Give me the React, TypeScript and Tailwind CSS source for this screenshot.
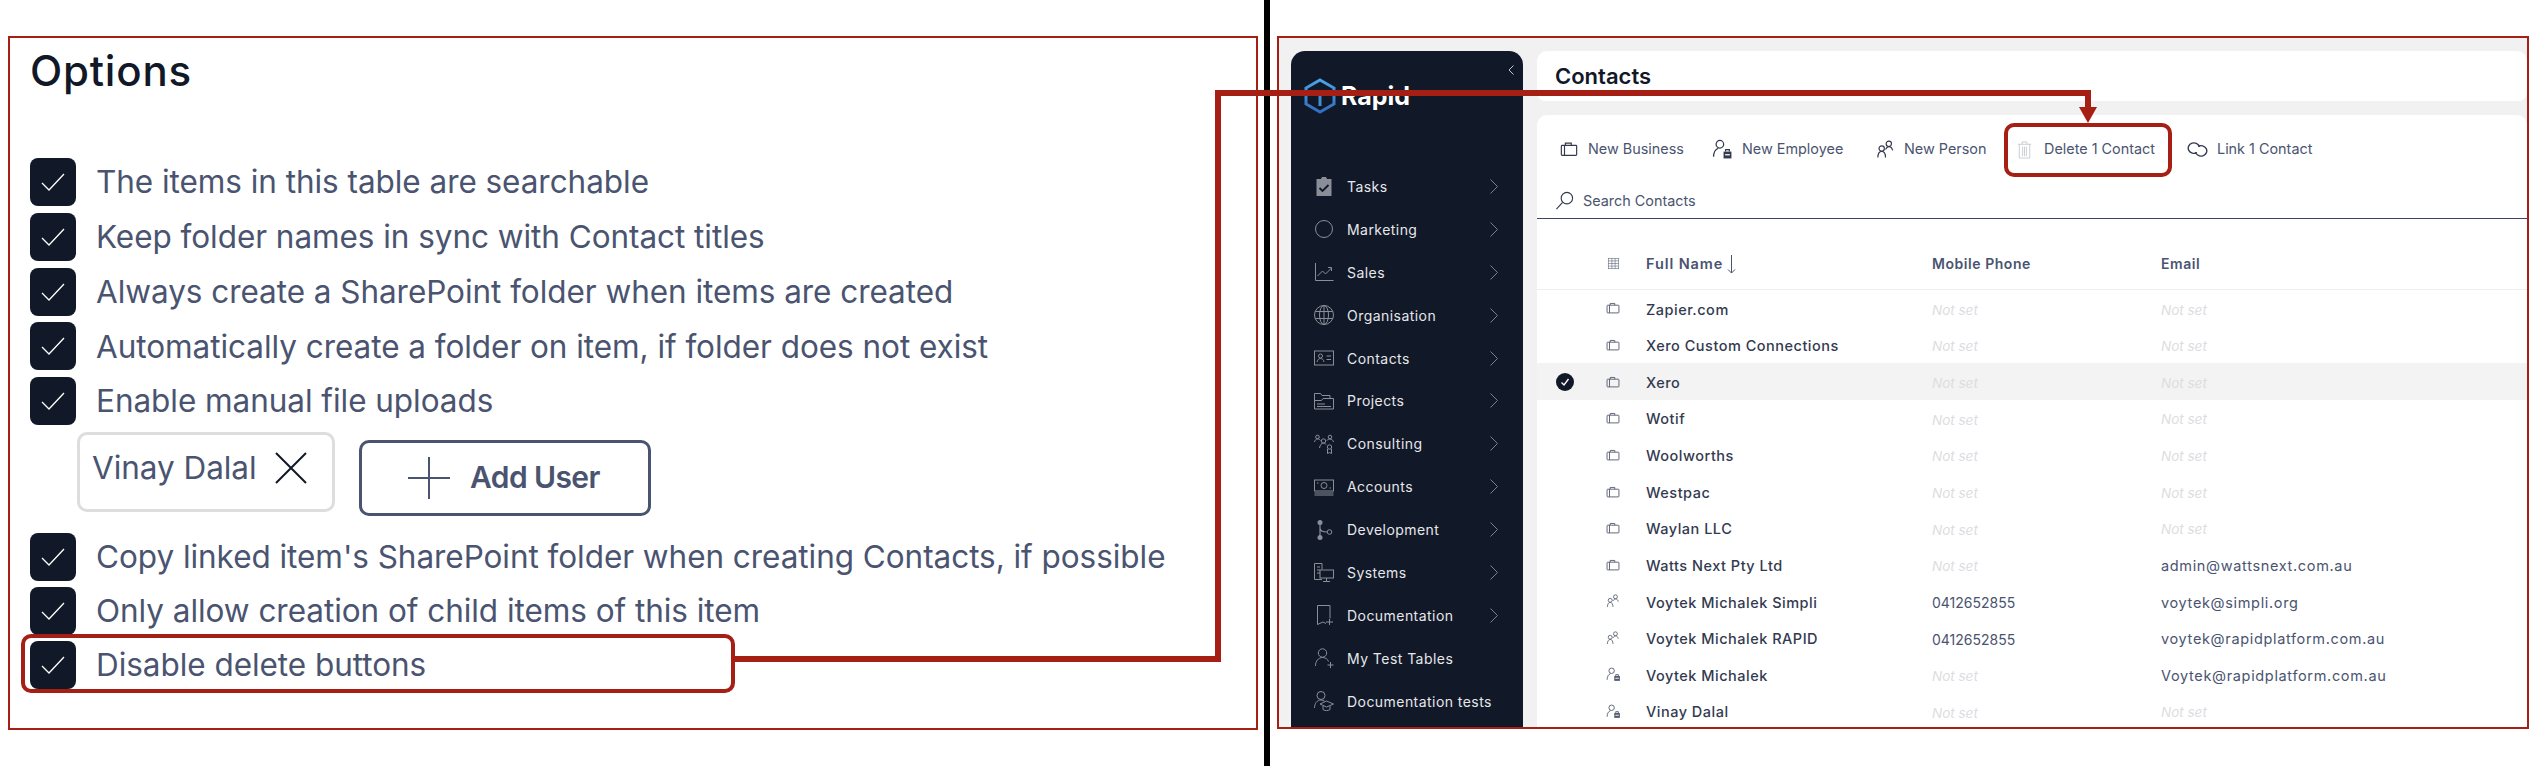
import React from 'react';

type IconProps = { size?: number; className?: string };

const Svg: React.FC<IconProps & { children: React.ReactNode; sw?: number }> = ({ size = 20, className, children, sw = 1 }) => (
  <svg width={size} height={size} viewBox="0 0 20 20" fill="none" stroke="currentColor" strokeWidth={sw} className={className}>
    {children}
  </svg>
);

// toolbar + row icons
const Briefcase: React.FC<IconProps> = (p) => (
  <Svg {...p} sw={1.3}>
    <rect x="1.5" y="6" width="17" height="11" rx="1" />
    <path d="M5 17V6M6 6V3.500h6.500V6" />
  </Svg>
);
const Employee: React.FC<IconProps> = (p) => (
  <Svg {...p} sw={1.2}>
    <circle cx="7.500" cy="5" r="3.600" />
    <path d="M1.500 17c0-4 1.500-7 4.500-8.200" />
    <rect x="11" y="12" width="7.500" height="6.500" fill="currentColor" stroke="none" />
    <path d="M13 12v-1.800h3.500V12" />
    <path d="M12.500 15h4.500" stroke="#fff" />
  </Svg>
);
const People: React.FC<IconProps> = (p) => (
  <Svg {...p} sw={1.2}>
    <circle cx="13.500" cy="4" r="2.800" />
    <circle cx="6" cy="9" r="2.800" />
    <path d="M10 10c1-2 2-3 3.500-3 2 0 3.500 1.500 4 4" />
    <path d="M2 18.500c0-3.500 1.500-6.500 4-6.500s4 3 4 6.500" />
  </Svg>
);
const Trash: React.FC<IconProps> = (p) => (
  <Svg {...p} sw={1}>
    <path d="M3 4.500h14M7.500 4.500V2h5v2.500M4.500 4.500v14.500h11V4.500M8 7v10M10 7v10M12 7v10" />
  </Svg>
);
const LinkIcon: React.FC<IconProps> = (p) => (
  <Svg {...p} sw={1.3}>
    <path d="M9.500 13A5.500 5 0 1 1 12 7.500" />
    <path d="M10.500 7A5.500 5 0 1 1 8 12.500" />
  </Svg>
);
const Search: React.FC<IconProps> = (p) => (
  <Svg {...p} sw={1.2}>
    <circle cx="12.500" cy="7.500" r="6" />
    <path d="M8 12 1.500 19" />
  </Svg>
);
const TableGrid: React.FC<IconProps> = (p) => (
  <Svg {...p} sw={1}>
    <rect x="2" y="2" width="16" height="16" />
    <path d="M2 6h16M2 10h16M2 14h16M7.500 2v16M12.500 2v16" />
  </Svg>
);

// sidebar icons
const Tasks: React.FC<IconProps> = (p) => (
  <Svg {...p}>
    <path d="M2.500 3h4.500l1-2h4l1 2h4.500v17h-15z" fill="currentColor" stroke="none" />
    <path d="M5.500 12l3 3 6-6" stroke="#111827" strokeWidth={1.800} />
  </Svg>
);
const Circle: React.FC<IconProps> = (p) => (
  <Svg {...p}><circle cx="10" cy="10" r="8.500" /></Svg>
);
const Sales: React.FC<IconProps> = (p) => (
  <Svg {...p}>
    <path d="M1.500 1v17.500h18M3.500 14l5-5 3 3 6-6M14 5.500h3.500V9" />
  </Svg>
);
const Globe: React.FC<IconProps> = (p) => (
  <Svg {...p}>
    <circle cx="10" cy="10" r="9.500" />
    <ellipse cx="10" cy="10" rx="4.500" ry="9.500" />
    <path d="M10 .5v19M1.300 6.500h17.400M1.300 13.500h17.400" />
  </Svg>
);
const Card: React.FC<IconProps> = (p) => (
  <Svg {...p}>
    <rect x=".5" y="3" width="19" height="14" />
    <circle cx="6.500" cy="8" r="2" />
    <path d="M3 14c.5-2.500 2-3.500 3.500-3.500S9.500 11.500 10 14M12.500 8h4.500M12.500 11.500h4.500" />
  </Svg>
);
const Folders: React.FC<IconProps> = (p) => (
  <Svg {...p}>
    <path d="M.5 18V2.500h6l1.500 2h8v3" />
    <path d="M.5 18h19V7.500H9l-1.500 2H.5" />
    <path d="M3 13h8M3 15.500h14" />
  </Svg>
);
const Consulting: React.FC<IconProps> = (p) => (
  <Svg {...p}>
    <circle cx="3.500" cy="3" r="1.800" /><circle cx="16" cy="3" r="1.800" />
    <circle cx="9.500" cy="7" r="2.200" /><circle cx="15.500" cy="13" r="2.200" />
    <path d="M.5 8c.5-2 1.500-3 3-3s2 .5 3 1.500M13 6.500c.5-1 1.500-1.500 3-1.500s3 1 3.500 3M5.500 14c.5-3 2-5 4-5 1 0 2 .5 2.500 1.500M13.500 15v4.500l2-1 2 1V15" />
  </Svg>
);
const Money: React.FC<IconProps> = (p) => (
  <Svg {...p}>
    <rect x=".5" y="3" width="19" height="11" />
    <circle cx="10" cy="8.500" r="3" />
    <path d="M.5 16h19M.5 18h19M3 6h1.500M15.500 11H17" />
  </Svg>
);
const Branch: React.FC<IconProps> = (p) => (
  <Svg {...p}>
    <circle cx="6" cy="2.500" r="2.500" fill="currentColor" stroke="none" />
    <circle cx="6" cy="17.500" r="2.500" fill="currentColor" stroke="none" />
    <circle cx="15.500" cy="12" r="2.300" />
    <path d="M6 3v14M6 8c0 3 3 4 7 4" strokeWidth={1.200} />
  </Svg>
);
const Systems: React.FC<IconProps> = (p) => (
  <Svg {...p}>
    <path d="M8 17.500H.5V1.500H8v6M3 5h3M3 8h3M3 11h3" />
    <rect x="6" y="8" width="13.500" height="8" />
    <path d="M12.500 16v3M9 19.500h7" />
  </Svg>
);
const BookPlus: React.FC<IconProps> = (p) => (
  <Svg {...p}>
    <path d="M3.500 19.500V.5h12.500v13M3.500 19.500l5.500-2.500 3 1.500M12 17h7M15.500 14v6" />
  </Svg>
);
const UserPlus: React.FC<IconProps> = (p) => (
  <Svg {...p}>
    <circle cx="8.500" cy="5" r="4.200" />
    <path d="M1.500 18c0-5 3-8.500 7-8.500 3 0 5 1.500 6 4M13.500 17h6M16.500 14v6" />
  </Svg>
);
const UserGrad: React.FC<IconProps> = (p) => (
  <Svg {...p}>
    <circle cx="7" cy="4.500" r="4" />
    <path d="M.5 17c0-4.500 2.500-8 6.500-8 1.500 0 2.500.5 3.500 1M6 13l6.500-3 7 3-7 3zM9 15v3.500c2 1.500 5 1.500 7 0V15" />
  </Svg>
);

const Check = () => (
  <svg width="24" height="18" viewBox="0 0 24 18" fill="none" stroke="#fff" strokeWidth="1.300">
    <path d="M1 10l7 7L23 1" />
  </svg>
);

const optionsTop = [
  'The items in this table are searchable',
  'Keep folder names in sync with Contact titles',
  'Always create a SharePoint folder when items are created',
  'Automatically create a folder on item, if folder does not exist',
  'Enable manual file uploads',
];
const optionsBottom = [
  "Copy linked item's SharePoint folder when creating Contacts, if possible",
  'Only allow creation of child items of this item',
  'Disable delete buttons',
];

const OptionRow: React.FC<{ label: string }> = ({ label }) => (
  <div className="flex h-[48px] items-center gap-[20px]">
    <div className="flex h-[48px] w-[46px] shrink-0 items-center justify-center rounded-[8px] bg-[#111827]">
      <Check />
    </div>
    <span className="text-[31.5px] tracking-[-0.05px] text-[#4a5470]">{label}</span>
  </div>
);

const navItems: { label: string; icon: React.FC<IconProps>; arrow: boolean }[] = [
  { label: 'Tasks', icon: Tasks, arrow: true },
  { label: 'Marketing', icon: Circle, arrow: true },
  { label: 'Sales', icon: Sales, arrow: true },
  { label: 'Organisation', icon: Globe, arrow: true },
  { label: 'Contacts', icon: Card, arrow: true },
  { label: 'Projects', icon: Folders, arrow: true },
  { label: 'Consulting', icon: Consulting, arrow: true },
  { label: 'Accounts', icon: Money, arrow: true },
  { label: 'Development', icon: Branch, arrow: true },
  { label: 'Systems', icon: Systems, arrow: true },
  { label: 'Documentation', icon: BookPlus, arrow: true },
  { label: 'My Test Tables', icon: UserPlus, arrow: false },
  { label: 'Documentation tests', icon: UserGrad, arrow: false },
];

const toolbar: { label: string; icon: React.FC<IconProps>; size: number; iconClass: string; width: string; gap: string }[] = [
  { label: 'New Business', icon: Briefcase, size: 18, iconClass: 'text-[#333a4f]', width: 'w-[152px]', gap: 'gap-[10px]' },
  { label: 'New Employee', icon: Employee, size: 21, iconClass: 'text-[#333a4f]', width: 'w-[164px]', gap: 'gap-[9px]' },
  { label: 'New Person', icon: People, size: 19, iconClass: 'text-[#333a4f]', width: 'w-[139px]', gap: 'gap-[9px]' },
  { label: 'Delete 1 Contact', icon: Trash, size: 19, iconClass: 'text-[#c9cbd1]', width: 'w-[172px]', gap: 'gap-[10px]' },
  { label: 'Link 1 Contact', icon: LinkIcon, size: 21, iconClass: 'text-[#333a4f]', width: 'w-[172px]', gap: 'gap-[9px]' },
];

const rows: { name: string; kind: 'biz' | 'person' | 'emp'; phone?: string; email?: string; selected?: boolean }[] = [
  { name: 'Zapier.com', kind: 'biz' },
  { name: 'Xero Custom Connections', kind: 'biz' },
  { name: 'Xero', kind: 'biz', selected: true },
  { name: 'Wotif', kind: 'biz' },
  { name: 'Woolworths', kind: 'biz' },
  { name: 'Westpac', kind: 'biz' },
  { name: 'Waylan LLC', kind: 'biz' },
  { name: 'Watts Next Pty Ltd', kind: 'biz', email: 'admin@wattsnext.com.au' },
  { name: 'Voytek Michalek Simpli', kind: 'person', phone: '0412652855', email: 'voytek@simpli.org' },
  { name: 'Voytek Michalek RAPID', kind: 'person', phone: '0412652855', email: 'voytek@rapidplatform.com.au' },
  { name: 'Voytek Michalek', kind: 'emp', email: 'Voytek@rapidplatform.com.au' },
  { name: 'Vinay Dalal', kind: 'emp' },
];

const NotSet = () => <span className="text-[13.5px] italic tracking-normal text-[#dcdde1]">Not set</span>;

const Sidebar = () => (
  <aside className="relative w-[232px] shrink-0 rounded-t-[14px] bg-[#111827] pl-[13px]">
    <svg className="absolute right-[9px] top-[14px]" width="6" height="10" viewBox="0 0 6 10" fill="none" stroke="#c5c7cd">
      <path d="M5.500.5 1 5l4.500 4.500" />
    </svg>
    <div className="mt-[27px] flex h-[36px] items-center gap-[5px]">
      <svg width="32" height="36" viewBox="0 0 32 36" fill="none">
        <defs>
          <linearGradient id="logoBlue" x1="0" y1="0" x2="0" y2="1">
            <stop offset="0" stopColor="#4aa3e8" />
            <stop offset="1" stopColor="#2f6fc0" />
          </linearGradient>
        </defs>
        <path d="M16 2 30 10v16l-14 8-14-8V10z" stroke="url(#logoBlue)" strokeWidth="3" />
        <path d="M9 14h14M16 14v14" stroke="#3f8fd6" strokeWidth="3" />
      </svg>
      <span className="text-[25px] font-bold leading-none text-white">Rapid</span>
    </div>
    <nav className="mt-[51px] flex flex-col">
      {navItems.map(({ label, icon: Icon, arrow }) => (
        <div key={label} className="flex h-[42.9px] items-center">
          <div className="flex w-[34px] shrink-0 items-center pl-[10px] text-[#8a8e98]">
            <Icon size={20} />
          </div>
          <span className="ml-[9px] whitespace-nowrap text-[14px] tracking-[0.45px] text-[#e6e7ea]">{label}</span>
          {arrow && (
            <svg className="absolute left-[199px]" width="8" height="15" viewBox="0 0 8 15" fill="none" stroke="#7c808b">
              <path d="M.5.5l7 7-7 7" />
            </svg>
          )}
        </div>
      ))}
    </nav>
  </aside>
);

const ContactsTable = () => (
  <div className="flex min-h-0 flex-1 flex-col rounded-t-[10px] bg-white">
    <div className="flex h-[69px] items-center pl-[23px]">
      {toolbar.map(({ label, icon: Icon, size, iconClass, width, gap }) => (
        <div key={label} className={`flex shrink-0 items-center ${width} ${gap}`}>
          <Icon size={size} className={iconClass} />
          <span className="whitespace-nowrap text-[14.4px] text-[#4a5470]">{label}</span>
        </div>
      ))}
    </div>
    <div className="flex h-[36px] items-center gap-[9px] border-b-[1.5px] border-[#3c4560] pl-[18px]">
      <Search size={19} className="text-[#333a4f]" />
      <span className="text-[14.4px] text-[#4a5470]">Search Contacts</span>
    </div>
    <div className="flex h-[71px] items-center border-b border-[#eeeeee] pt-[19px] text-[14px] font-semibold tracking-[0.55px] text-[#4a5470]">
      <div className="w-[70px] shrink-0" />
      <TableGrid size={13} className="text-[#6b7280]" />
      <div className="ml-[26px] flex w-[286px] shrink-0 items-center gap-[4px]">
        <span className="text-[14.5px] tracking-[0.9px]">Full Name</span>
        <svg width="9" height="20" viewBox="0 0 9 20" fill="none" stroke="#4a5470"><path d="M4.500 1v18M1 15.500 4.500 19 8 15.500" /></svg>
      </div>
      <div className="w-[229px] shrink-0">Mobile Phone</div>
      <div>Email</div>
    </div>
    <div className="flex flex-col overflow-hidden">
      {rows.map((r) => (
        <div key={r.name} className={`flex h-[36.64px] shrink-0 items-center text-[14.5px] tracking-[0.5px] ${r.selected ? 'bg-[#f3f3f3]' : ''}`}>
          <div className="w-[69px] shrink-0 pl-[19px]">
            {r.selected && (
              <div className="flex h-[18px] w-[18px] items-center justify-center rounded-full bg-[#111827]">
                <svg width="10" height="10" viewBox="0 0 10 10" fill="none" stroke="#fff" strokeWidth="1.400"><path d="M1.500 5.500 4 8l4.500-6" /></svg>
              </div>
            )}
          </div>
          <div className="w-[40px] shrink-0">
            {r.kind === 'biz' && <Briefcase size={14} className="text-[#555c70]" />}
            {r.kind === 'person' && <People size={14} className="text-[#555c70]" />}
            {r.kind === 'emp' && <Employee size={15} className="text-[#555c70]" />}
          </div>
          <div className="w-[286px] shrink-0 pt-[2px] font-medium text-[#333a4f]">{r.name}</div>
          <div className="w-[229px] shrink-0 pt-[2px] text-[14px] tracking-normal text-[#4a5470]">{r.phone ?? <NotSet />}</div>
          <div className="pt-[2px] tracking-[0.66px] text-[#4a5470]">{r.email ?? <NotSet />}</div>
        </div>
      ))}
    </div>
  </div>
);

const App: React.FC = () => (
  <div className="relative flex h-[766px] w-[2536px] overflow-hidden bg-white pt-[36px] font-['Inter',sans-serif]">
    {/* left: options panel */}
    <section className="ml-[8px] h-[694px] w-[1250px] shrink-0 border-2 border-[#a61f14] pl-[20px]">
      <h2 className="mt-[9px] text-[42px] font-medium leading-[48px] tracking-[0.8px] text-[#111827]">Options</h2>
      <div className="mt-[63px] flex flex-col gap-[6.750px]">
        {optionsTop.map((o) => <OptionRow key={o} label={o} />)}
        <div className="flex items-start gap-[24px] pl-[47px]">
          <div className="flex h-[80px] w-[258px] items-center gap-[18px] rounded-[10px] border-[3px] border-[#dddddd] pl-[12px] pb-[8px]">
            <span className="text-[31.5px] tracking-[-0.05px] text-[#4a5470]">Vinay Dalal</span>
            <svg width="32" height="32" viewBox="0 0 32 32" stroke="#111827" strokeWidth="2"><path d="M1 1l30 30M31 1 1 31" /></svg>
          </div>
          <div className="mt-[8px] flex h-[76px] w-[292px] items-center gap-[20px] rounded-[10px] border-[3px] border-[#4a5470] pl-[46px]">
            <svg width="42" height="42" viewBox="0 0 42 42" stroke="#4a5470" strokeWidth="2"><path d="M21 0v42M0 21h42" /></svg>
            <span className="text-[30px] font-semibold tracking-[-0.6px] text-[#4a5470]">Add User</span>
          </div>
        </div>
        <div className="mt-[10px] flex flex-col gap-[6px]">
          {optionsBottom.map((o) => <OptionRow key={o} label={o} />)}
        </div>
      </div>
    </section>

    {/* black divider runs the full height */}
    <div className="absolute left-[1264px] top-0 h-full w-[6px] bg-black" />

    {/* right: app screenshot */}
    <section className="ml-[19px] flex h-[693px] w-[1252px] shrink-0 gap-[14px] overflow-hidden border-2 border-[#a61f14] bg-[#f1f1f1] pl-[12px] pt-[13px]">
      <Sidebar />
      <main className="flex min-w-0 flex-1 flex-col gap-[14px]">
        <div className="flex h-[50px] shrink-0 items-center rounded-t-[10px] rounded-b-[8px] bg-white pl-[18px]">
          <h1 className="text-[22px] font-semibold text-[#111827]">Contacts</h1>
        </div>
        <ContactsTable />
      </main>
    </section>

    {/* red callouts on top */}
    <div className="absolute left-[21px] top-[634px] h-[59px] w-[714px] rounded-[10px] border-[4px] border-[#a61f14]" />
    <div className="absolute left-[2004px] top-[123px] h-[54px] w-[168px] rounded-[10px] border-[4px] border-[#a61f14]" />
    <svg className="absolute left-0 top-0" width="2536" height="766" fill="none">
      <path d="M735 659H1218V93H2088V108" stroke="#a61f14" strokeWidth="6" />
      <path d="M2079 107h18l-9 16z" fill="#a61f14" />
    </svg>
  </div>
);

export default App;
